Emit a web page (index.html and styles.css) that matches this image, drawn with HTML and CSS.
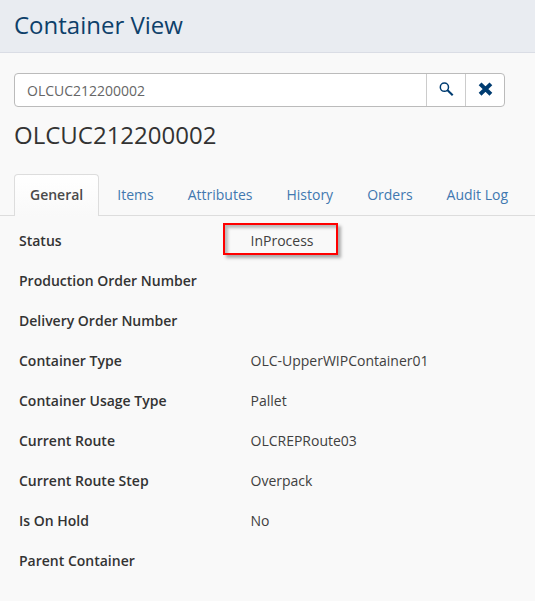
FILE: index.html
```html
<!DOCTYPE html>
<html lang="en">
<head>
<meta charset="utf-8">
<title>Container View</title>
<link rel="stylesheet" href="styles.css">
</head>
<body>
<header class="header"><h1>Container View</h1></header>
<main>
  <div class="search">
    <input class="search-input" type="text" value="OLCUC212200002" aria-label="Container">
    <button class="search-button" aria-label="Search"><svg width="16" height="16" viewBox="0 0 16 16"><circle cx="6.4" cy="5.2" r="4.1" fill="none" stroke="currentColor" stroke-width="1.5"/><path d="M9.3 8.1L14.7 13.2" stroke="currentColor" stroke-width="2.1"/></svg></button>
    <button class="search-button" aria-label="Clear"><svg width="16" height="16" viewBox="0 0 16 16"><path d="M3.1 1.9L13.9 12.3M13.9 1.9L3.1 12.3" stroke="currentColor" stroke-width="4"/></svg></button>
  </div>
  <h2>OLCUC212200002</h2>
  <nav class="tabs">
    <a class="tab active">General</a><a class="tab">Items</a><a class="tab">Attributes</a><a class="tab">History</a><a class="tab">Orders</a><a class="tab">Audit Log</a>
  </nav>
  <dl class="details">
    <dt>Status</dt><dd><span class="highlight">InProcess</span></dd>
    <dt>Production Order Number</dt><dd></dd>
    <dt>Delivery Order Number</dt><dd></dd>
    <dt>Container Type</dt><dd>OLC-UpperWIPContainer01</dd>
    <dt>Container Usage Type</dt><dd>Pallet</dd>
    <dt>Current Route</dt><dd>OLCREPRoute03</dd>
    <dt>Current Route Step</dt><dd>Overpack</dd>
    <dt>Is On Hold</dt><dd>No</dd>
    <dt>Parent Container</dt><dd></dd>
  </dl>
</main>
</body>
</html>
```
FILE: styles.css
```css
* { box-sizing: border-box; }
body { margin: 0; height: 601px; overflow: hidden; background: #f9f9f9; color: #333; font: 14px/20px "Open Sans", sans-serif; }
h1, h2 { margin: 0; font-weight: 400; font-size: 24px; }
.header { height: 53px; padding: 8px 14px; background: #e9ecf1; border-bottom: 1px solid #dadde5; }
h1 { color: #0e406a; line-height: 33px; }
main { padding-top: 20px; }
.search { display: flex; width: 491px; height: 34px; margin-left: 14px; border: 1px solid #bbb; border-radius: 4px; background: #fff; overflow: hidden; }
.search-input { flex: 1; min-width: 0; border: 0; padding: 2px 12px 0; background: none; font: inherit; color: #666; outline: 0; }
.search-button { width: 39px; border: 0; border-left: 1px solid #ccc; padding: 0; background: none; color: #003c71; display: flex; align-items: center; justify-content: center; }
h2 { margin: 10px 14px 0; line-height: 36px; }
.tabs { display: flex; margin-top: 21px; padding-left: 14px; height: 42px; border-bottom: 1px solid #ddd; }
.tab { height: 42px; padding: 10px 15px 0; margin-right: 2px; border: 1px solid transparent; border-bottom: 0; border-radius: 4px 4px 0 0; color: #4178b0; white-space: nowrap; }
.tab.active { background: linear-gradient(#fff, #f9f9f9); border-color: #ddd; color: #4a4a4a; font-weight: 600; }
.details { display: grid; grid-template-columns: 231.5px 1fr; grid-auto-rows: 40px; margin: 5px 0 0 19px; line-height: 40px; }
dt { font-weight: 600; }
dd { margin: 0; color: #404040; }
.highlight { display: block; width: 115px; height: 32px; margin: 2px 0 0 -27.5px; padding-left: 25.5px; line-height: 32px; border: 2px solid #f00; box-shadow: 3px 3px 3px #aaa, inset 3px 3px 3px #bbb; }
```
